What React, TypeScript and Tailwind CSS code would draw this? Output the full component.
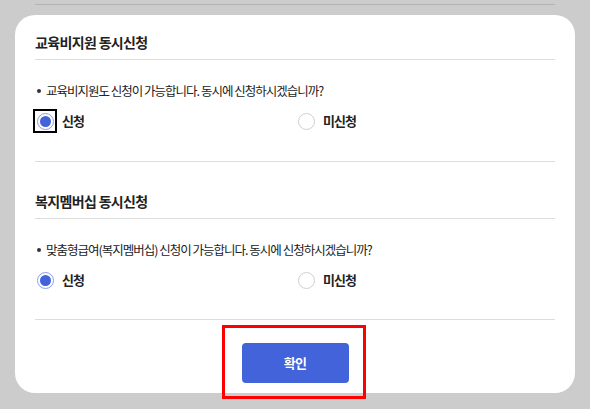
import React from "react";

function Radio({ checked, focused }: { checked: boolean; focused?: boolean }) {
  return (
    <span
      className={
        "flex h-[20px] w-[20px] items-center justify-center " +
        (focused ? "outline-[2px] outline-solid outline-black" : "")
      }
    >
      <span
        className={
          "flex h-[17px] w-[17px] items-center justify-center rounded-full border bg-white " +
          (checked ? "border-[#8a9ee8]" : "border-[#cfcfcf]")
        }
      >
        {checked && <span className="h-[11px] w-[11px] rounded-full bg-[#4263d9]" />}
      </span>
    </span>
  );
}

function Section({ title, question, gapTop }: { title: string; question: string; gapTop: string }) {
  return (
    <div className={gapTop}>
      <h3 className="border-b border-[#dddddd] pb-[6px] text-[14px] leading-[22px] font-bold tracking-[-0.047em] text-[#222]">
        {title}
      </h3>
      <p className="mt-[21px] flex items-center text-[12.5px] leading-[20px] tracking-[-0.08em] text-[#222]">
        <span className="mr-[5px] ml-[2px] inline-block h-[4px] w-[4px] rounded-full bg-[#333]" />
        {question}
      </p>
      <div className="mt-[10px] flex">
        <label className="flex w-[261px] items-center gap-[7px] text-[13px] font-bold tracking-[-0.07em] text-[#222]">
          <Radio checked focused={title.startsWith("교육")} />
          신청
        </label>
        <label className="flex items-center gap-[7px] text-[13px] font-bold tracking-[-0.07em] text-[#222]">
          <Radio checked={false} />
          미신청
        </label>
      </div>
    </div>
  );
}

export default function App() {
  return (
    <div
      className="h-[409px] w-[590px] overflow-hidden bg-[#cccccc]"
      style={{ fontFamily: '"Noto Sans CJK KR", "Noto Sans", sans-serif' }}
    >
      <div className="mx-[35px] h-[5px] border-b border-[#b3b3b3]" />
      <div className="relative mx-[15px] mt-[10px] h-[378px] rounded-[20px] bg-white px-[20px] pt-[16px]">
        <Section title="교육비지원 동시신청" question="교육비지원도 신청이 가능합니다. 동시에 신청하시겠습니까?" gapTop="" />
        <div className="mt-[30px] border-t border-[#dddddd]" />
        <Section
          title="복지멤버십 동시신청"
          question="맞춤형급여(복지멤버십) 신청이 가능합니다. 동시에 신청하시겠습니까?"
          gapTop="mt-[28px]"
        />
        <div className="mt-[29px] border-t border-[#dddddd]" />
        <div className="relative mt-[23px] flex justify-center">
          <button className="h-[40px] w-[107px] rounded-[4px] bg-[#4263d9] text-[13px] font-bold tracking-[-0.05em] text-white">
            확인
          </button>
          <div className="pointer-events-none absolute top-[-18px] left-[187px] h-[74px] w-[144px] border-[3px] border-[#ff0000]" />
        </div>
      </div>
    </div>
  );
}
